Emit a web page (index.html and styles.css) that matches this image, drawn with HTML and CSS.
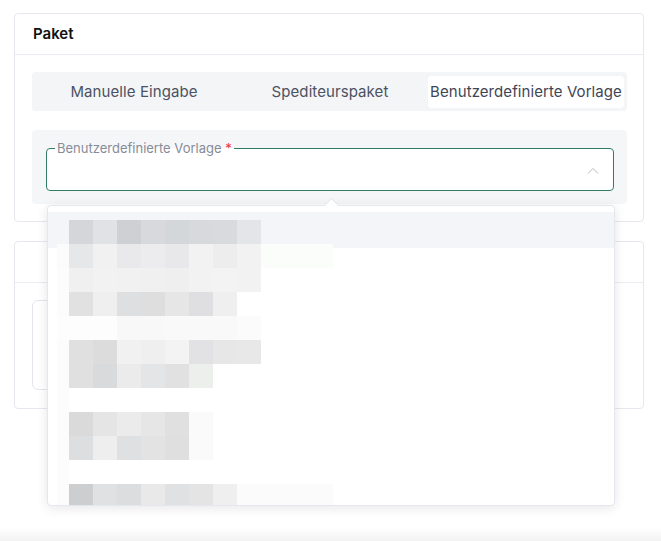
FILE: index.html
```html
<!DOCTYPE html>
<html lang="de">
<head>
    <meta charset="UTF-8">
    <meta name="viewport" content="width=device-width, initial-scale=1.0">
    <title>Paket</title>
    <link rel="stylesheet" href="styles.css">
</head>
<body>
    <div class="card">
        <div class="card-header">Paket</div>
        <div class="card-body">
            <div class="segmented">
                <div class="segment">Manuelle Eingabe</div>
                <div class="segment">Spediteurspaket</div>
                <div class="segment active">Benutzerdefinierte Vorlage</div>
            </div>
            <div class="form-section">
                <div class="select-wrap">
                    <fieldset class="select-field">
                        <legend>Benutzerdefinierte Vorlage <span class="required">*</span></legend>
                        <div class="select-value">
                            <svg class="chevron" width="12" height="7" viewBox="0 0 12 7">
                                <polyline points="1,6.5 6,1.5 11,6.5" fill="none" stroke="#b4b8bf" stroke-width="1"/>
                            </svg>
                        </div>
                    </fieldset>
                    <div class="dropdown">
                        <span class="dropdown-arrow"></span>
                        <ul class="options">
                            <li class="option hover"></li>
                            <li class="option"></li>
                            <li class="option"></li>
                            <li class="option"></li>
                            <li class="option"></li>
                            <li class="option"></li>
                            <li class="option"></li>
                            <li class="option"></li>
                        </ul>
                        <div class="mosaic" id="mosaic"></div>
                    </div>
                </div>
            </div>
        </div>
    </div>

    <div class="card second">
        <div class="card-header"></div>
        <div class="card-body">
            <div class="inner-box"></div>
        </div>
    </div>

    <div class="page-foot"></div>

    <script>
        // pixelated preview of the template list (blurred names)
        const rows = [
            ['', 'd5d6da', 'e0e2e6', 'cfd0d4', 'd8d9dc', 'd4d7da', 'd8d9dc', 'd9dadd', 'e4e5e9', '', '', ''],
            ['fbfbfb', 'e6e7e9', 'f1f1f1', 'e9e9eb', 'ececee', 'e8e8ea', 'f2f2f2', 'ededee', 'f2f2f2', 'fbfdfb', 'fbfdfb', 'fbfdfb'],
            ['fcfcfc', 'f0f0f0', 'f1f2f1', 'f0f1f0', 'f0f0f0', 'efefef', 'f2f2f2', 'f3f3f3', 'f2f2f2', '', '', ''],
            ['fcfcfc', 'e1e1e1', 'efefef', 'dedfe0', 'dedede', 'e5e6e5', 'dfdfe1', 'efefef', '', '', '', ''],
            ['fdfdfd', 'fdfdfd', 'fdfdfd', 'f8f8f8', 'f8f8f8', 'f9f9f9', 'f9f9f9', 'f9f9f9', 'fbfbfb', '', '', ''],
            ['fcfcfc', 'e0e0e0', 'dcdcdd', 'f0f1f0', 'eeefee', 'f3f3f3', 'e2e2e4', 'e6e7e6', 'e8e8e8', '', '', ''],
            ['fcfcfc', 'e0e0e0', 'd9dadb', 'eaebea', 'e4e5e6', 'e1e1e1', 'edefed', '', '', '', '', ''],
            ['fcfcfc', '', '', '', '', '', '', '', '', '', '', ''],
            ['fcfcfc', 'dadada', 'e5e5e5', 'ebebeb', 'e6e6e6', 'e0e0e0', 'fafafa', '', '', '', '', ''],
            ['fcfcfc', 'dddee0', 'eeeeee', 'dfe0e2', 'e3e3e3', 'dfdfdf', 'fafafa', '', '', '', '', ''],
            ['fcfcfc', '', '', '', '', '', '', '', '', '', '', ''],
            ['fbfcfb', 'cdced0', 'e0e1e3', 'dcdddf', 'e9e9e9', 'e0e1e3', 'e4e4e4', 'efefef', 'fbfbfb', 'fbfbfb', 'fbfbfb', 'fbfbfb']
        ];

        const mosaic = document.getElementById("mosaic");
        rows.forEach(row => {
            row.forEach(color => {
                let cell = document.createElement("div");
                if (color) cell.style.background = "#" + color;
                mosaic.appendChild(cell);
            });
        });
    </script>
</body>
</html>
```

FILE: styles.css
```css
body {
    font-family: Inter, "Noto Sans", sans-serif;
    margin: 0;
    padding: 13px 17px 0 14px;
    background: white;
    color: #111;
}
.card {
    border: 1px solid #e7e8ef;
    border-radius: 4px;
    background: white;
}
.card.second {
    margin-top: 19px;
}
.card-header {
    height: 40px;
    line-height: 40px;
    padding: 0 18px;
    border-bottom: 1px solid #ebecf2;
    font-size: 15px;
    font-weight: 600;
    color: #111;
}
.card-body {
    padding: 17px 16px 17px 17px;
}
.second .card-body {
    padding-bottom: 18px;
}
.segmented {
    display: grid;
    grid-template-columns: repeat(3, 1fr);
    padding: 4px 3px 3px 4px;
    background: #f4f5f7;
    border-radius: 4px;
}
.segment {
    height: 32px;
    line-height: 32px;
    text-align: center;
    font-size: 15px;
    letter-spacing: 0.08px;
    color: #4b5262;
    white-space: nowrap;
    border-radius: 4px;
}
.segment.active {
    background: white;
    color: #3f4656;
}
.form-section {
    margin-top: 19px;
    padding: 10px 13px 13px 14px;
    background: #f5f6f8;
    border-radius: 4px;
}
.select-wrap {
    position: relative;
}
.select-field {
    margin: 0;
    padding: 0 10px;
    border: 1px solid #2f7d63;
    border-radius: 4px;
    background: white;
}
.select-field legend {
    padding: 0 2px;
    margin-left: -2px;
    font-size: 13px;
    line-height: 16px;
    color: #868c97;
}
.required {
    color: #e8343a;
}
.select-value {
    height: 34px;
    display: flex;
    align-items: center;
    justify-content: flex-end;
    padding: 0 4px 6px 0;
    box-sizing: border-box;
}
.chevron {
    display: block;
}
.dropdown {
    position: absolute;
    top: calc(100% + 14px);
    left: 1px;
    right: -1px;
    height: 301px;
    background: white;
    border: 1px solid #e4e7ed;
    border-radius: 4px;
    box-shadow: 0 2px 12px rgba(0, 0, 0, 0.1);
    box-sizing: border-box;
    z-index: 10;
}
.dropdown-arrow {
    position: absolute;
    top: -6px;
    left: 278px;
    width: 10px;
    height: 10px;
    background: white;
    border-top: 1px solid #e4e7ed;
    border-left: 1px solid #e4e7ed;
    transform: rotate(45deg);
}
.options {
    list-style: none;
    margin: 0;
    padding: 6px 0;
    height: 100%;
    overflow: hidden;
    box-sizing: border-box;
    position: relative;
    border-radius: 4px;
}
.option {
    height: 36px;
}
.option.hover {
    background: #f4f5f8;
}
.mosaic {
    position: absolute;
    top: 14px;
    left: 9px;
    display: grid;
    grid-template-columns: 12px repeat(11, 24px);
    grid-auto-rows: 24px;
    height: 285px;
    overflow: hidden;
}
.inner-box {
    height: 88px;
    width: 566px;
    border: 1px solid #e4e6ee;
    border-radius: 6px;
}
.page-foot {
    margin: 118px -17px 0 -14px;
    height: 14px;
    background: linear-gradient(#ffffff, #f3f3f3);
}
```
